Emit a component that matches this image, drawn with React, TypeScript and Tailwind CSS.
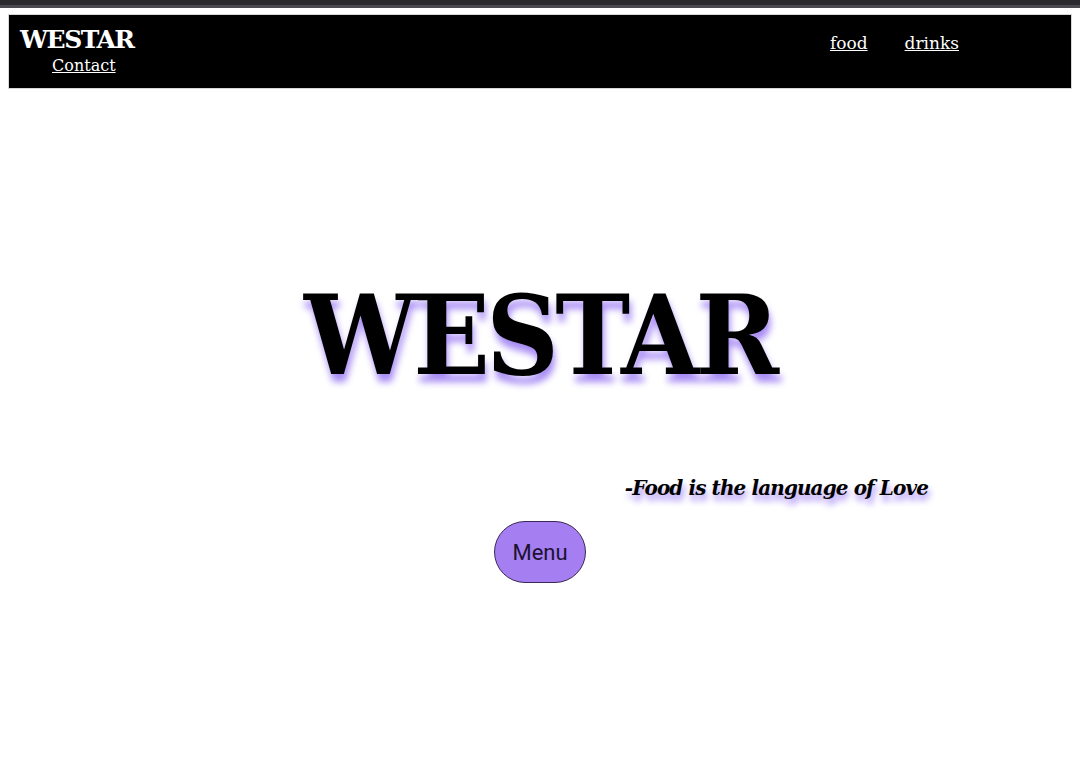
import React from "react";

export default function App() {
  return (
    <div className="min-h-[766px] w-[1080px] bg-white">
      <div className="h-[5px] bg-[#2a2a2f]" />
      <div className="h-[3px] bg-[#4a4a50]" />
      <div className="px-[8px] pt-[6px]">
        <header className="flex h-[75px] items-start justify-between border border-[#d8d8d8] bg-black font-['DejaVu_Serif',serif] text-white">
          <div className="flex flex-col items-center pl-[11px] pt-[9px]">
            <span className="text-[25px] font-bold leading-[31px] tracking-[-1.5px]">WESTAR</span>
            <a href="#" className="ml-[14px] text-[16px] leading-[22px] underline">Contact</a>
          </div>
          <nav className="flex gap-[37px] pr-[112px] pt-[17px] text-[17px] leading-[22px]">
            <a href="#" className="underline">food</a>
            <a href="#" className="underline">drinks</a>
          </nav>
        </header>
      </div>
      <main className="flex flex-col">
        <div className="mt-[177px] flex justify-center">
          <h1 className="scale-x-[0.915] text-center font-['DejaVu_Serif',serif] text-[110px] font-bold leading-[140px] tracking-[-4px] text-black [text-shadow:2px_8px_8px_#a88cf5]">
            WESTAR
          </h1>
        </div>
        <div className="mt-[68px] flex justify-end pr-[152px]">
          <p className="font-['DejaVu_Serif',serif] text-[20px] font-bold italic leading-[28px] tracking-[-0.9px] text-black [text-shadow:2px_6px_6px_#a88cf5]">
            -Food is the language of Love
          </p>
        </div>
        <div className="mt-[19px] flex justify-center">
          <button className="h-[62px] w-[92px] rounded-full border-[1.5px] border-[#3b2a55] bg-[#a57ef2] font-['Roboto',sans-serif] text-[22px] text-[#1c1230]">
            Menu
          </button>
        </div>
      </main>
    </div>
  );
}
